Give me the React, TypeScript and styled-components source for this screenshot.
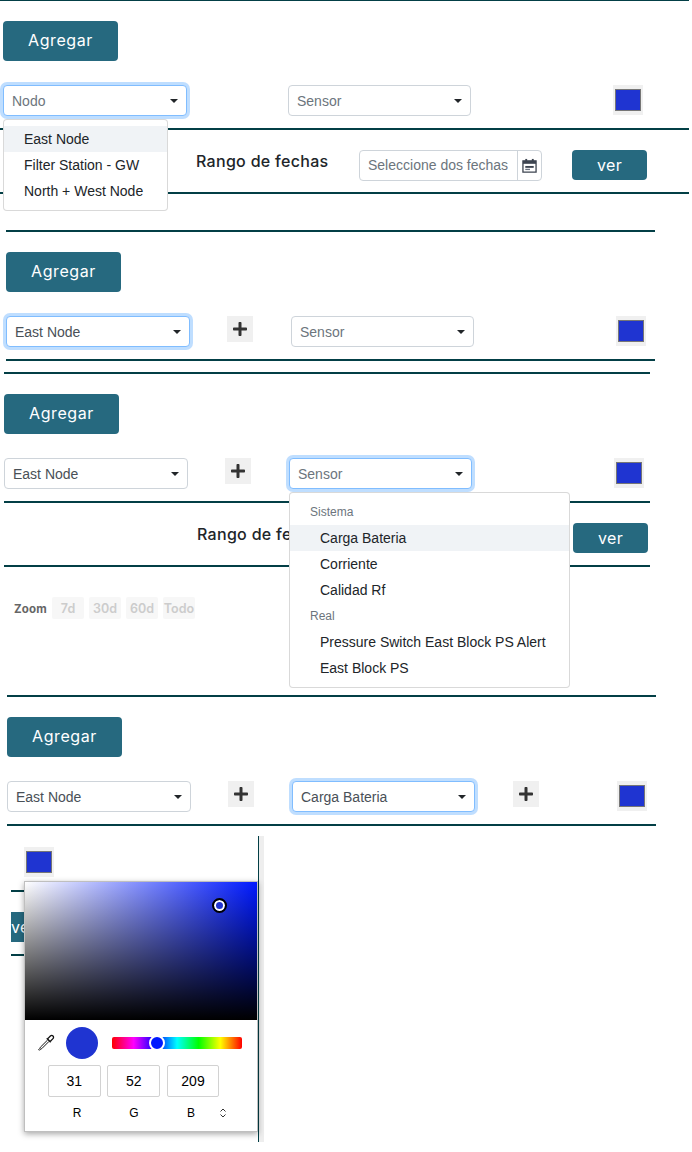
import styled, { createGlobalStyle } from "styled-components";
import { FaPlus } from "react-icons/fa";

const TEAL_LINE = "#033f46";
const PICKED = "#1f34d1";

const GlobalStyle = createGlobalStyle`
    html, body {
        margin: 0;
        padding: 0;
        background: #fff;
    }
    body {
        font-family: "Liberation Sans", Arial, sans-serif;
        font-size: 14px;
        color: #495057;
    }
    * {
        box-sizing: border-box;
    }
`;

const Page = styled.div`
    width: 692px;
    height: 1152px;
    overflow: hidden;
    display: flex;
    flex-direction: column;
    align-items: flex-start;
`;

const Section = styled.section<{ $left: number; $width: number; $top: number }>`
    margin-left: ${(p) => p.$left}px;
    margin-top: ${(p) => p.$top}px;
    width: ${(p) => p.$width}px;
    flex-shrink: 0;
`;

const Divider = styled.div`
    height: 2px;
    background: ${TEAL_LINE};
`;

const Content = styled.div<{ $inset: number }>`
    padding: 20px 0 12px ${(p) => p.$inset}px;
`;

const AddButton = styled.button`
    display: block;
    width: 115px;
    height: 40px;
    padding: 0 0 2px;
    border: none;
    border-radius: 4px;
    background: #26697f;
    color: #fff;
    font-family: Inter, "Open Sans", sans-serif;
    font-size: 16px;
    letter-spacing: 0.6px;
`;

const FilterRow = styled.div`
    margin-top: 24px;
    display: grid;
    grid-template-columns: 184px 37px 64px 183px 38px 104px 30px;
    grid-template-areas: "node . add sensor . add2 swatch";
    align-items: start;
`;

const SelectBox = styled.div<{ $area: string; $focused?: boolean; $placeholder?: boolean }>`
    grid-area: ${(p) => p.$area};
    position: relative;
    height: 31px;
    padding: 0 8px;
    display: flex;
    align-items: center;
    justify-content: space-between;
    background: #fff;
    border: 1px solid ${(p) => (p.$focused ? "#80bdff" : "#ced4da")};
    border-radius: 4px;
    box-shadow: ${(p) => (p.$focused ? "0 0 0 3px rgba(0, 123, 255, 0.25)" : "none")};
    color: ${(p) => (p.$placeholder ? "#6c757d" : "#495057")};
`;

const Caret = styled.span`
    width: 0;
    height: 0;
    border-left: 4px solid transparent;
    border-right: 4px solid transparent;
    border-top: 4px solid #212529;
`;

const Menu = styled.div<{ $width: number }>`
    position: absolute;
    top: 33px;
    left: -1px;
    z-index: 5;
    width: ${(p) => p.$width}px;
    padding: 6px 0;
    background: #fff;
    border: 1px solid rgba(0, 0, 0, 0.15);
    border-radius: 4px;
`;

const MenuItem = styled.div<{ $active?: boolean; $nested?: boolean }>`
    height: 26px;
    line-height: 26px;
    padding-left: ${(p) => (p.$nested ? 30 : 20)}px;
    color: #212529;
    white-space: nowrap;
    background: ${(p) => (p.$active ? "#f0f3f6" : "transparent")};
`;

const MenuHeader = styled.div`
    height: 26px;
    line-height: 26px;
    padding-left: 20px;
    font-size: 12px;
    color: #6c757d;
`;

const PlusButton = styled.div<{ $area: string }>`
    grid-area: ${(p) => p.$area};
    width: 26px;
    height: 26px;
    display: flex;
    align-items: center;
    justify-content: center;
    background: #f0f0f0;
    color: #333;
    font-size: 16px;
`;

const Swatch = styled.div`
    grid-area: swatch;
    width: 30px;
    height: 30px;
    display: flex;
    align-items: center;
    justify-content: center;
    background: #f0f0f0;
`;

const SwatchColor = styled.div`
    width: 26px;
    height: 22px;
    background: ${PICKED};
    border: 1px solid #767676;
`;

const DateRow = styled.div<{ $right: number }>`
    height: 62px;
    padding: 20px ${(p) => p.$right}px 0 0;
    display: flex;
    justify-content: flex-end;
    align-items: flex-start;
    gap: 30px;
`;

const RangeTitle = styled.div`
    width: 133px;
    font-family: Inter, "Open Sans", sans-serif;
    font-size: 16px;
    font-weight: 500;
    letter-spacing: 0.3px;
    line-height: 22px;
    color: #212529;
    white-space: nowrap;
`;

const DateInput = styled.div`
    width: 183px;
    height: 31px;
    display: flex;
    flex-shrink: 0;
    border: 1px solid #ced4da;
    border-radius: 4px;
    color: #6c757d;
`;

const DateText = styled.div`
    flex: 1;
    padding-left: 8px;
    line-height: 29px;
    white-space: nowrap;
`;

const DateAddon = styled.div`
    width: 24px;
    display: flex;
    align-items: center;
    justify-content: center;
    border-left: 1px solid #ced4da;
`;

const VerButton = styled.button`
    flex-shrink: 0;
    display: block;
    width: 75px;
    height: 30px;
    padding: 0;
    border: none;
    border-radius: 4px;
    background: #26697f;
    color: #fff;
    font-family: Inter, "Open Sans", sans-serif;
    font-size: 16px;
    letter-spacing: 0.4px;
`;

const ZoomRow = styled.div`
    margin: 30px 0 76px 10px;
    height: 22px;
    display: flex;
    align-items: center;
    gap: 5px;
`;

const ZoomLabel = styled.span`
    width: 33px;
    padding-top: 1px;
    font-family: Inter, "Open Sans", sans-serif;
    font-size: 11.5px;
    font-weight: 700;
    letter-spacing: 0.15px;
    color: #666;
`;

const ZoomChip = styled.span`
    width: 32px;
    height: 22px;
    line-height: 23px;
    text-align: center;
    border-radius: 2px;
    background: #f7f7f7;
    color: #cccccc;
    font-family: Inter, "Open Sans", sans-serif;
    font-size: 12.5px;
    font-weight: 600;
`;

const PickerFrame = styled.div`
    position: relative;
    margin: 10px 0 0 11px;
    width: 248px;
    height: 306px;
    flex-shrink: 0;
    padding-top: 11px;
    border-right: 1px solid ${TEAL_LINE};
    box-shadow: 5px 0 0 #eeeeee;
`;

const FrameClip = styled.div`
    overflow: hidden;
`;

const FrameSwatch = styled(Swatch)`
    margin-left: 13px;
`;

const CutLine = styled(Divider)`
    margin-top: 13px;
`;

const CutButton = styled(VerButton)`
    margin: 20px 0 12px -25px;
`;

const Picker = styled.div`
    position: absolute;
    top: 45px;
    left: 13px;
    width: 234px;
    height: 251px;
    z-index: 4;
    background: #fff;
    border: 1px solid #bfbfbf;
    box-shadow: 0 2px 6px rgba(0, 0, 0, 0.35);
`;

const SaturationArea = styled.div`
    position: relative;
    height: 138px;
    background: linear-gradient(to top, #000, rgba(0, 0, 0, 0)),
        linear-gradient(to right, #fff, hsl(234, 100%, 50%));
`;

const SaturationHandle = styled.div`
    position: absolute;
    left: 187px;
    top: 16px;
    width: 15px;
    height: 15px;
    border-radius: 50%;
    background: ${PICKED};
    border: 2px solid #000;
    box-shadow: inset 0 0 0 2px #fff;
`;

const PickerControls = styled.div`
    margin-top: 7px;
    padding-left: 12px;
    display: flex;
    align-items: center;
`;

const Dropper = styled.svg`
    width: 18px;
    height: 18px;
    margin-right: 11px;
`;

const ColorCircle = styled.div`
    width: 32px;
    height: 32px;
    margin-right: 14px;
    border-radius: 50%;
    background: ${PICKED};
`;

const HueBar = styled.div`
    position: relative;
    width: 130px;
    height: 12px;
    border-radius: 2px;
    background: linear-gradient(to right, #f00, #f0f, #00f, #0ff, #0f0, #ff0, #f00);
`;

const HueThumb = styled.div`
    position: absolute;
    left: 37px;
    top: -2px;
    width: 16px;
    height: 16px;
    border-radius: 50%;
    background: #0018ff;
    border: 2px solid #fff;
`;

const ValueRow = styled.div`
    margin-top: 6px;
    padding-left: 22.75px;
    display: grid;
    grid-template-columns: 53px 53px 52.5px;
    column-gap: 6.5px;
`;

const ValueInput = styled.div`
    height: 32px;
    line-height: 30px;
    text-align: center;
    border: 1px solid #d2d2d2;
    border-radius: 2px;
    color: #000;
`;

const LabelRow = styled.div`
    margin-top: 8px;
    padding-left: 23.5px;
    display: flex;
    align-items: center;
`;

const ValueLabel = styled.div`
    width: 57px;
    text-align: center;
    font-size: 12px;
    line-height: 16px;
    color: #000;
`;

const ModeToggle = styled.svg`
    width: 8px;
    height: 10px;
    margin-left: -1px;
`;

const CalendarIcon = () => (
    <svg width="15" height="15" viewBox="0 0 16 16">
        <path d="M1 3h14v12H1z" fill="none" stroke="#3d4450" strokeWidth="1.4" />
        <path d="M1 3h14v3.2H1z" fill="#3d4450" />
        <rect x="3.5" y="1" width="2" height="3" fill="#3d4450" />
        <rect x="10.5" y="1" width="2" height="3" fill="#3d4450" />
        <rect x="3.5" y="8.5" width="9" height="2" fill="#3d4450" />
        <rect x="3.5" y="11.5" width="5" height="1.4" fill="#6b7280" />
    </svg>
);

const DateFields = ({ right }: { right: number }) => (
    <DateRow $right={right}>
        <RangeTitle>Rango de fechas</RangeTitle>
        <DateInput>
            <DateText>Seleccione dos fechas</DateText>
            <DateAddon>
                <CalendarIcon />
            </DateAddon>
        </DateInput>
        <VerButton>ver</VerButton>
    </DateRow>
);

const ColorSwatch = () => (
    <Swatch>
        <SwatchColor />
    </Swatch>
);

export default function App() {
    return (
        <Page>
            <GlobalStyle />

            <Section $left={0} $width={689} $top={-1}>
                <Divider />
                <Content $inset={3}>
                    <AddButton>Agregar</AddButton>
                    <FilterRow>
                        <SelectBox $area="node" $focused $placeholder>
                            Nodo
                            <Caret />
                            <Menu $width={165}>
                                <MenuItem $active>East Node</MenuItem>
                                <MenuItem>Filter Station - GW</MenuItem>
                                <MenuItem>North + West Node</MenuItem>
                            </Menu>
                        </SelectBox>
                        <SelectBox $area="sensor" $placeholder>
                            Sensor
                            <Caret />
                        </SelectBox>
                        <ColorSwatch />
                    </FilterRow>
                </Content>
                <Divider />
                <DateFields right={42} />
                <Divider />
            </Section>

            <Section $left={6} $width={649} $top={36}>
                <Divider />
                <Content $inset={0}>
                    <AddButton>Agregar</AddButton>
                    <FilterRow>
                        <SelectBox $area="node" $focused>
                            East Node
                            <Caret />
                        </SelectBox>
                        <PlusButton $area="add">
                            <FaPlus />
                        </PlusButton>
                        <SelectBox $area="sensor" $placeholder>
                            Sensor
                            <Caret />
                        </SelectBox>
                        <ColorSwatch />
                    </FilterRow>
                </Content>
                <Divider />
            </Section>

            <Section $left={4} $width={646} $top={11}>
                <Divider />
                <Content $inset={0}>
                    <AddButton>Agregar</AddButton>
                    <FilterRow>
                        <SelectBox $area="node">
                            East Node
                            <Caret />
                        </SelectBox>
                        <PlusButton $area="add">
                            <FaPlus />
                        </PlusButton>
                        <SelectBox $area="sensor" $focused $placeholder>
                            Sensor
                            <Caret />
                            <Menu $width={281}>
                                <MenuHeader>Sistema</MenuHeader>
                                <MenuItem $nested $active>Carga Bateria</MenuItem>
                                <MenuItem $nested>Corriente</MenuItem>
                                <MenuItem $nested>Calidad Rf</MenuItem>
                                <MenuHeader>Real</MenuHeader>
                                <MenuItem $nested>Pressure Switch East Block PS Alert</MenuItem>
                                <MenuItem $nested>East Block PS</MenuItem>
                            </Menu>
                        </SelectBox>
                        <ColorSwatch />
                    </FilterRow>
                </Content>
                <Divider />
                <DateFields right={2} />
                <Divider />
                <ZoomRow>
                    <ZoomLabel>Zoom</ZoomLabel>
                    <ZoomChip>7d</ZoomChip>
                    <ZoomChip>30d</ZoomChip>
                    <ZoomChip>60d</ZoomChip>
                    <ZoomChip>Todo</ZoomChip>
                </ZoomRow>
            </Section>

            <Section $left={7} $width={649} $top={0}>
                <Divider />
                <Content $inset={0}>
                    <AddButton>Agregar</AddButton>
                    <FilterRow>
                        <SelectBox $area="node">
                            East Node
                            <Caret />
                        </SelectBox>
                        <PlusButton $area="add">
                            <FaPlus />
                        </PlusButton>
                        <SelectBox $area="sensor" $focused>
                            Carga Bateria
                            <Caret />
                        </SelectBox>
                        <PlusButton $area="add2">
                            <FaPlus />
                        </PlusButton>
                        <ColorSwatch />
                    </FilterRow>
                </Content>
                <Divider />
            </Section>

            <PickerFrame>
                <FrameSwatch>
                    <SwatchColor />
                </FrameSwatch>
                <FrameClip>
                    <CutLine />
                    <CutButton>ver</CutButton>
                    <Divider />
                </FrameClip>
                <Picker>
                    <SaturationArea>
                        <SaturationHandle />
                    </SaturationArea>
                    <PickerControls>
                        <Dropper viewBox="0 0 18 18" fill="none" stroke="#111" strokeWidth="1">
                            <path d="M10.8 4.6 13.4 2a1.8 1.8 0 0 1 2.6 2.6l-2.6 2.6" strokeWidth="1.3" />
                            <path d="M9.8 4.3 13.7 8.2" strokeWidth="1.5" />
                            <path d="M10.6 6 3.4 13.2c-.5.5-.4 1-.7 1.4l-1 1 .7.7 1-1c.4-.3.9-.2 1.4-.7L12 7.4" />
                        </Dropper>
                        <ColorCircle />
                        <HueBar>
                            <HueThumb />
                        </HueBar>
                    </PickerControls>
                    <ValueRow>
                        <ValueInput>31</ValueInput>
                        <ValueInput>52</ValueInput>
                        <ValueInput>209</ValueInput>
                    </ValueRow>
                    <LabelRow>
                        <ValueLabel>R</ValueLabel>
                        <ValueLabel>G</ValueLabel>
                        <ValueLabel>B</ValueLabel>
                        <ModeToggle viewBox="0 0 8 10" fill="none" stroke="#333" strokeWidth="1">
                            <path d="M1.5 3.5 4 1l2.5 2.5M1.5 6.5 4 9l2.5-2.5" />
                        </ModeToggle>
                    </LabelRow>
                </Picker>
            </PickerFrame>
        </Page>
    );
}
